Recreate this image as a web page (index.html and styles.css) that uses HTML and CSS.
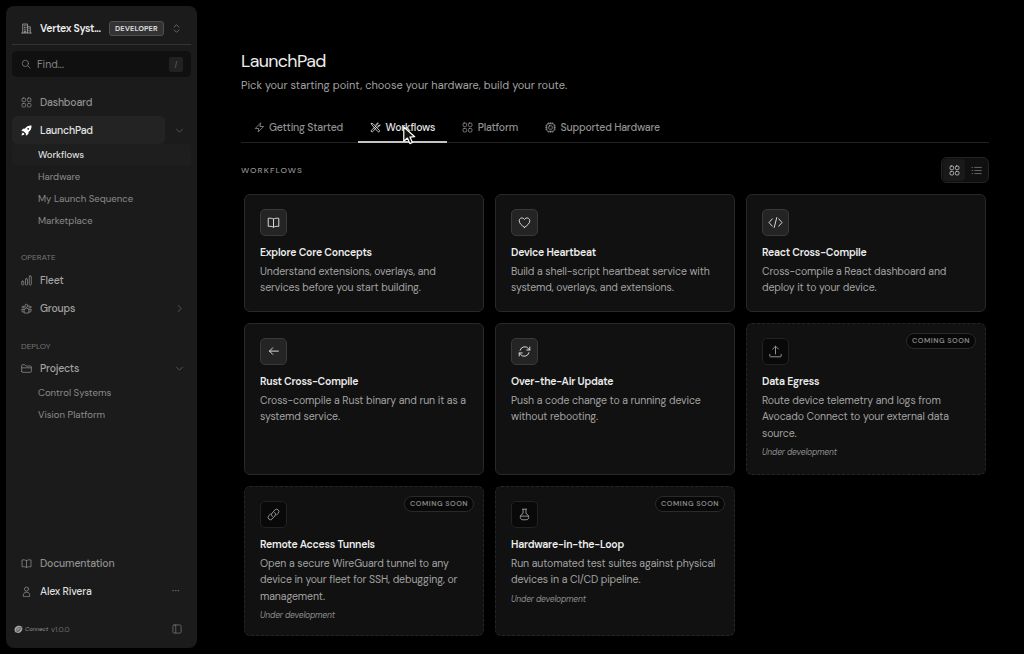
FILE: index.html
```
<!DOCTYPE html>
<html lang="en">
<head>
    <meta charset="UTF-8">
    <meta name="viewport" content="width=device-width, initial-scale=1.0">
    <title>LaunchPad - Workflows</title>
    <link rel="stylesheet" href="styles.css">
</head>
<body>
    <!-- shared icons -->
    <svg class="sprite" aria-hidden="true">
        <symbol id="grid" viewBox="0 0 16 16"><rect x="1.500" y="1.500" width="5.200" height="5.200" rx="1.700"/><rect x="9.300" y="1.500" width="5.200" height="5.200" rx="1.700"/><rect x="1.500" y="9.300" width="5.200" height="5.200" rx="1.700"/><rect x="9.300" y="9.300" width="5.200" height="5.200" rx="1.700"/></symbol>
        <symbol id="book" viewBox="0 0 16 16"><path d="M8 3.800C6.500 2.700 4 2.500 1.500 2.800v10c2.500-.3 5-.1 6.500 1 1.500-1.100 4-1.300 6.500-1v-10C12 2.500 9.500 2.700 8 3.800zM8 3.800v10"/></symbol>
        <symbol id="down" viewBox="0 0 16 16"><path d="M2.500 5.500L8 11l5.500-5.500"/></symbol>
        <symbol id="right" viewBox="0 0 16 16"><path d="M5.500 2.500L11 8l-5.500 5.500"/></symbol>
    </svg>

    <aside class="sidebar">
        <div class="org">
            <svg class="icon" viewBox="0 0 16 16"><path d="M1 14.500h14M2.500 14.500v-13h7v13M9.500 5.500h4v9M4.800 4h.5M6.900 4h.5M4.800 6.500h.5M6.900 6.500h.5M4.800 9h.5M6.900 9h.5M5 14v-2.500h2V14M11.500 8v.5M11.500 11v.5"/></svg>
            <span class="org-name">Vertex Syst...</span>
            <span class="plan">DEVELOPER</span>
            <svg class="icon sorter" viewBox="0 0 16 16"><path d="M4.500 6L8 2.500 11.500 6M4.500 10L8 13.500l3.500-3.500"/></svg>
        </div>

        <div class="search">
            <svg class="icon" viewBox="0 0 16 16"><circle cx="7" cy="7" r="5"/><path d="M10.700 10.700l4 4"/></svg>
            <span>Find...</span>
            <kbd>/</kbd>
        </div>

        <nav class="nav">
            <a class="item t-dash"><svg class="icon"><use href="#grid"/></svg><span>Dashboard</span></a>
            <div class="item-row">
                <a class="item active"><svg class="icon rocket" viewBox="0 0 16 16"><path d="M15.300.7c-4.300-.3-7.300 1.200-9.300 4.300L2.800 5.300.5 8.800l3.200.2 3.300 3.300.2 3.200 3.500-2.300.3-3.200c3.100-2 4.600-5 4.300-9.300zM3 11c-1.600.6-2 2.300-2.200 4.200C2.700 15 4.400 14.600 5 13z"/><circle class="hole" cx="10.500" cy="5.500" r="1.300"/></svg><span>LaunchPad</span></a>
                <svg class="chevron"><use href="#down"/></svg>
            </div>
            <a class="sub current">Workflows</a>
            <a class="sub">Hardware</a>
            <a class="sub">My Launch Sequence</a>
            <a class="sub">Marketplace</a>

            <h2 class="group">OPERATE</h2>
            <a class="item"><svg class="icon" viewBox="0 0 16 16"><rect x="1" y="9" width="3" height="5.500" rx="1"/><rect x="6.500" y="5.500" width="3" height="9" rx="1"/><rect x="12" y="1.500" width="3" height="13" rx="1"/></svg><span>Fleet</span></a>
            <div class="item-row">
                <a class="item"><svg class="icon" viewBox="0 0 16 16"><circle cx="8" cy="4" r="2.200"/><circle cx="3" cy="6" r="1.500"/><circle cx="13" cy="6" r="1.500"/><path d="M4.500 14v-3a3.500 3.500 0 0 1 7 0v3zM4.500 13H2L1 9.500h3.500M11.500 13H14l1-3.500h-3.500"/></svg><span>Groups</span></a>
                <svg class="chevron"><use href="#right"/></svg>
            </div>

            <h2 class="group deploy">DEPLOY</h2>
            <div class="item-row">
                <a class="item"><svg class="icon" viewBox="0 0 16 16"><path d="M1 12.500v-9a1 1 0 0 1 1-1h3.500L7.500 4.500H14a1 1 0 0 1 1 1v7a1 1 0 0 1-1 1H2a1 1 0 0 1-1-1zM1 7h14"/></svg><span>Projects</span></a>
                <svg class="chevron"><use href="#down"/></svg>
            </div>
            <a class="sub">Control Systems</a>
            <a class="sub">Vision Platform</a>
        </nav>

        <div class="account">
            <a class="item docs"><svg class="icon"><use href="#book"/></svg><span>Documentation</span></a>
            <div class="item-row">
                <a class="item user"><svg class="icon" viewBox="0 0 16 16"><circle cx="8" cy="4.500" r="3"/><path d="M3.500 15c-1-3.500 1-6 4.500-6s5.500 2.500 4.500 6z"/></svg><span>Alex Rivera</span></a>
                <span class="dots">···</span>
            </div>
        </div>

        <footer class="foot">
            <svg class="logo" viewBox="0 0 16 16"><path d="M9.500 1.500C5 1 .8 4.500 1 9c.1 3.500 3 5.500 6 5.300C11.500 14 15 10 15 6 15 3 12.500 1.500 9.500 1.500z"/><path class="ring" d="M11 4.500c-3-1-6.500 1.500-6.500 4.500 0 2 2.500 2.500 4.500 1s1.500-3 0-3M.500 14C4 14 9 11 15.500 2"/></svg>
            <span class="brand">Connect</span>
            <span class="version">v1.0.0</span>
            <svg class="icon panel" viewBox="0 0 16 16"><rect x="1.500" y="1.500" width="13" height="13" rx="2"/><path d="M6 1.500v13"/></svg>
        </footer>
    </aside>

    <main class="main">
        <h1>LaunchPad</h1>
        <p class="lead">Pick your starting point, choose your hardware, build your route.</p>

        <div class="tabs">
            <a class="tab"><svg class="icon" viewBox="0 0 16 16"><path d="M9.500 1.500L1.800 9.500h5L6 14.500l8-8H9z"/></svg><span>Getting Started</span></a>
            <a class="tab selected">
                <svg class="icon" viewBox="0 0 16 16"><path d="M2 2l2.500.7L13.500 12a1.300 1.300 0 0 1-2 2L3 4.500zM14.500 4.500a3.200 3.200 0 0 1-4.300 2.600L4 14a1.400 1.400 0 0 1-2-2l6.900-6.200A3.200 3.200 0 0 1 12 1.500L10.500 3.500l2 2z"/></svg><span>Workflows</span>
                <svg class="cursor" viewBox="0 0 14 20"><path d="M1.500 1v15l3.800-3.300 2.600 5.800 2.700-1.200-2.600-5.700 5-.3z"/></svg>
            </a>
            <a class="tab"><svg class="icon"><use href="#grid"/></svg><span>Platform</span></a>
            <a class="tab"><svg class="icon" viewBox="0 0 16 16"><rect x="2.500" y="2.500" width="11" height="11" rx="2"/><rect x="5.500" y="5.500" width="5" height="5" rx="1"/><path d="M5.500 1v1.500M8 1v1.500M10.500 1v1.500M5.500 13.500V15M8 13.500V15M10.500 13.500V15M1 5.500h1.500M1 8h1.500M1 10.500h1.500M13.500 5.500H15M13.500 8H15M13.500 10.500H15"/></svg><span>Supported Hardware</span></a>
        </div>

        <div class="section-head">
            <h2>WORKFLOWS</h2>
            <div class="view-toggle">
                <span class="on"><svg class="icon"><use href="#grid"/></svg></span>
                <span><svg class="icon" viewBox="0 0 16 16"><path d="M5.500 3.500H15M5.500 8H15M5.500 12.500H15M1.500 3.500h1M1.500 8h1M1.500 12.500h1"/></svg></span>
            </div>
        </div>

        <div class="cards">
            <article class="card">
                <div class="tile"><svg class="icon"><use href="#book"/></svg></div>
                <h3>Explore Core Concepts</h3>
                <p>Understand extensions, overlays, and<br>services before you start building.</p>
            </article>
            <article class="card">
                <div class="tile"><svg class="icon" viewBox="0 0 16 16"><path d="M8 14C4.500 11.700 1.500 9 1.500 5.800c0-3.500 4.500-4.800 6.500-1.500 2-3.300 6.500-2 6.500 1.500C14.500 9 11.500 11.700 8 14z"/></svg></div>
                <h3>Device Heartbeat</h3>
                <p>Build a shell-script heartbeat service with<br>systemd, overlays, and extensions.</p>
            </article>
            <article class="card">
                <div class="tile"><svg class="icon wide" viewBox="0 0 18 16"><path d="M5 3.500L1 8l4 4.500M13 3.500L17 8l-4 4.500M10.500 2l-3 12"/></svg></div>
                <h3>React Cross-Compile</h3>
                <p>Cross-compile a React dashboard and<br>deploy it to your device.</p>
            </article>
            <article class="card">
                <div class="tile"><svg class="icon" viewBox="0 0 16 16"><path d="M14 7.500H3M7 3.500l-4 4 4 4"/></svg></div>
                <h3>Rust Cross-Compile</h3>
                <p>Cross-compile a Rust binary and run it as a<br>systemd service.</p>
            </article>
            <article class="card">
                <div class="tile"><svg class="icon" viewBox="0 0 16 16"><path d="M2.500 6.500A6 6 0 0 1 13 4.500l1.500 1.700M14.500 2.500v3.700h-3.700M13.500 9.500A6 6 0 0 1 3 11.500L1.500 9.800M1.500 13.500V9.800h3.700"/></svg></div>
                <h3>Over-the-Air Update</h3>
                <p>Push a code change to a running device<br>without rebooting.</p>
            </article>
            <article class="card soon">
                <span class="badge">COMING SOON</span>
                <div class="tile"><svg class="icon" viewBox="0 0 16 16"><path d="M8 11V1.500M4.500 5L8 1.500 11.500 5M1 11.500v2a1 1 0 0 0 1 1h12a1 1 0 0 0 1-1v-2"/></svg></div>
                <h3>Data Egress</h3>
                <p>Route device telemetry and logs from<br>Avocado Connect to your external data<br>source.</p>
                <em>Under development</em>
            </article>
            <article class="card soon">
                <span class="badge">COMING SOON</span>
                <div class="tile"><svg class="icon" viewBox="0 0 16 16"><path d="M6.500 10.500a3 3 0 0 1-.2-4.300l3.500-3.800a2.800 2.800 0 0 1 4 4L11.500 8.900M9.500 5.500a3 3 0 0 1 .2 4.300l-3.500 3.800a2.800 2.800 0 0 1-4-4l2.300-2.500"/></svg></div>
                <h3>Remote Access Tunnels</h3>
                <p>Open a secure WireGuard tunnel to any<br>device in your fleet for SSH, debugging, or<br>management.</p>
                <em>Under development</em>
            </article>
            <article class="card soon">
                <span class="badge">COMING SOON</span>
                <div class="tile"><svg class="icon" viewBox="0 0 16 16"><path d="M5.500 1.500h5M6.200 1.500v5.200C4 7.700 2.800 9.500 2.800 11.500c0 1.800 1.400 3 3.200 3h4c1.800 0 3.200-1.200 3.200-3 0-2-1.200-3.800-3.400-4.800V1.500M3 10h10"/></svg></div>
                <h3>Hardware-in-the-Loop</h3>
                <p>Run automated test suites against physical<br>devices in a CI/CD pipeline.</p>
                <em>Under development</em>
            </article>
        </div>
    </main>
</body>
</html>
```
FILE: styles.css
```
* {
    box-sizing: border-box;
}

body {
    margin: 0;
    height: 654px;
    display: flex;
    overflow: hidden;
    background: #000;
    color: #a3a3a3;
    font-family: "DM Sans", Inter, "Liberation Sans", sans-serif;
    font-size: 10.5px;
}

h1, h2, h3, p {
    margin: 0;
}

.sprite {
    position: absolute;
    width: 0;
    height: 0;
}

svg {
    flex: none;
    fill: none;
    stroke: currentColor;
    stroke-width: 1.2;
    stroke-linecap: round;
    stroke-linejoin: round;
}

.icon {
    width: 11px;
    height: 11px;
}

/* sidebar */
.sidebar {
    flex: none;
    width: 191px;
    height: 642px;
    margin: 6px 0 0 6px;
    padding: 0 6px;
    border-radius: 8px;
    background: #1b1b1b;
    display: flex;
    flex-direction: column;
}

.org {
    height: 39px;
    padding: 6px 9px 0 9px;
    border-bottom: 1px solid #343434;
    display: flex;
    align-items: center;
}

.org-name {
    flex: none;
    width: 77px;
    padding-left: 8px;
    color: #ededed;
    font-weight: 600;
    letter-spacing: -.3px;
    white-space: nowrap;
}

.plan {
    height: 15px;
    padding: 0 5px;
    border: 1px solid #505050;
    border-radius: 3px;
    background: #333;
    color: #d8d8d8;
    font-size: 7.400px;
    font-weight: 700;
    line-height: 13px;
    letter-spacing: .08px;
}

.sorter {
    margin-left: auto;
    color: #777;
}

.search {
    height: 26px;
    margin-top: 6px;
    padding: 0 8px 0 9px;
    border-radius: 5px;
    background: #101010;
    color: #858585;
    display: flex;
    align-items: center;
}

.search .icon {
    width: 10px;
    height: 10px;
}

.search span {
    margin-left: 6px;
}

kbd {
    width: 14px;
    height: 15px;
    margin-left: auto;
    border-radius: 2px;
    background: #222;
    color: #686868;
    font: 8px/15px Inter, sans-serif;
    text-align: center;
}

.nav {
    margin-top: 11px;
}

.item-row {
    display: flex;
    align-items: center;
}

.item {
    height: 28px;
    width: 153px;
    padding-left: 9px;
    border-radius: 5px;
    display: flex;
    align-items: center;
    gap: 8px;
    font-weight: 500;
    letter-spacing: -.2px;
}

.item .icon {
    color: #858585;
}

.item.t-dash {
    color: #919191;
}

.item.active {
    background: #232323;
    color: #e3e3e3;
}

.rocket path {
    fill: #fff;
    stroke: none;
}

.rocket .hole {
    fill: #232323;
    stroke: none;
}

.chevron {
    width: 9px;
    height: 9px;
    margin-left: 10px;
    color: #6f6f6f;
}

.sub {
    display: block;
    height: 21.900px;
    padding-left: 26px;
    border-radius: 4px;
    color: #8b8b8b;
    font-size: 9.600px;
    line-height: 21.900px;
}

.sub.current {
    background: #1e1e1e;
    color: #dedede;
    font-weight: 500;
    letter-spacing: -.1px;
}

.group {
    height: 12px;
    margin: 20px 0 3px 9px;
    color: #757575;
    font-size: 8.200px;
    font-weight: 400;
    line-height: 12px;
}

.group.deploy {
    margin: 18px 0 1.500px 9px;
}

.account {
    margin-top: auto;
}

.docs {
    color: #919191;
}

.user {
    color: #dedede;
}

.dots {
    margin-left: 7px;
    color: #7c7c7c;
    letter-spacing: .6px;
}

.foot {
    height: 24px;
    margin: 12px 0 7px;
    padding: 0 9px 0 2px;
    display: flex;
    align-items: center;
}

.logo {
    width: 9px;
    height: 9px;
    fill: #a5a5a5;
    stroke: none;
}

.logo .ring {
    fill: none;
    stroke: #333;
    stroke-width: 1;
}

.brand {
    margin-left: 2px;
    width: 26px;
    color: #999;
    font-size: 5.800px;
    font-style: italic;
}

.version {
    color: #6c6c6c;
    font-size: 7.500px;
}

.panel {
    width: 10px;
    height: 10px;
    margin-left: auto;
    color: #777;
}

/* content */
.main {
    width: 748px;
    margin-left: 44px;
    padding-top: 50px;
}

h1 {
    color: #ededed;
    font-size: 17.800px;
    font-weight: 400;
    line-height: 23px;
    letter-spacing: -.65px;
}

.lead {
    margin-top: 4px;
    font-size: 11px;
    line-height: 16px;
    letter-spacing: .03px;
}

.tabs {
    height: 32px;
    margin-top: 18px;
    border-bottom: 1px solid #222;
    display: flex;
    gap: 3px;
}

.tab {
    position: relative;
    height: 32px;
    padding: 0 11.500px 0 12.500px;
    display: flex;
    align-items: center;
    gap: 4.500px;
    color: #919191;
    font-weight: 500;
    letter-spacing: -.2px;
}

.tab.selected {
    border-bottom: 2px solid #c4c4c4;
    color: #e6e6e6;
    padding-top: 2px;
}

.cursor {
    position: absolute;
    left: 44px;
    top: 15px;
    width: 14px;
    height: 19px;
    fill: #111;
    stroke: #fff;
    stroke-width: 1.300;
}

.section-head {
    height: 26px;
    margin-top: 14px;
    display: flex;
    align-items: center;
    justify-content: space-between;
}

.section-head h2 {
    color: #919191;
    font-size: 8.400px;
    font-weight: 500;
    letter-spacing: 1.050px;
}

.view-toggle {
    width: 48px;
    height: 26px;
    padding: 1px;
    border: 1px solid #242424;
    border-radius: 6px;
    background: #101010;
    color: #777;
    display: flex;
}

.view-toggle span {
    flex: 1;
    border-radius: 4px;
    display: flex;
    align-items: center;
    justify-content: center;
}

.view-toggle .on {
    background: #191919;
    color: #ccc;
}

.cards {
    margin: 11px 3px 0;
    display: grid;
    grid-template-columns: repeat(3, 240px);
    grid-template-rows: 118px 152px 150px;
    gap: 11px;
}

.card {
    position: relative;
    padding: 14px 15px;
    border: 1px solid #292929;
    border-radius: 6px;
    background: #111;
}

.card.soon {
    border-style: dashed;
    border-color: #262626;
}

.tile {
    width: 27px;
    height: 27px;
    border: 1px solid #393939;
    border-radius: 5px;
    background: #242424;
    color: #ddd;
    display: flex;
    align-items: center;
    justify-content: center;
}

.tile .icon {
    width: 13px;
    height: 13px;
}

.tile .wide {
    width: 15px;
}

.soon .tile {
    border-color: #222;
    background: #090909;
    color: #949494;
}

.card h3 {
    margin-top: 9px;
    color: #ededed;
    font-size: 10.500px;
    font-weight: 600;
    line-height: 16px;
    letter-spacing: -.23px;
}

.card p {
    margin-top: 2.800px;
    font-size: 10.500px;
    line-height: 16.500px;
    letter-spacing: -.1px;
    white-space: nowrap;
}

.card em {
    display: block;
    margin-top: 5px;
    color: #8d8d8d;
    font-size: 8.500px;
    line-height: 12px;
    letter-spacing: -.2px;
}

.badge {
    position: absolute;
    top: 9px;
    right: 9px;
    height: 16px;
    padding: 0 5px;
    border: 1px solid #2a2a2a;
    border-radius: 8px;
    background: #080808;
    color: #858585;
    font-size: 7.300px;
    font-weight: 600;
    line-height: 14px;
    letter-spacing: .45px;
}
```
